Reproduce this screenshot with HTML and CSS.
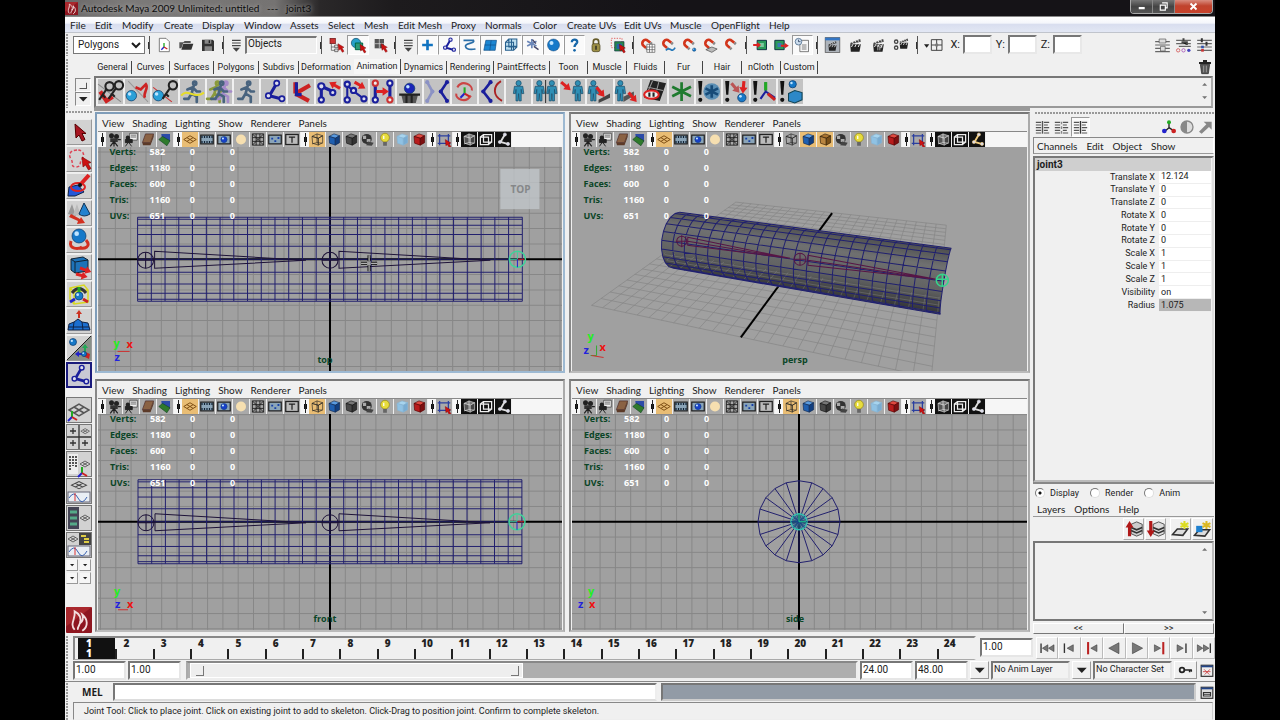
FILE: index.html
```html
<!DOCTYPE html>
<html lang="en">
<head>
<meta charset="utf-8">
<title>Autodesk Maya 2009 Unlimited: untitled --- joint3</title>
<link rel="stylesheet" href="styles.css">
</head>
<body>
<div class="app">
  <header class="titlebar">
    <span class="logo" data-icon="maya"></span>
    <h1>Autodesk Maya 2009 Unlimited: untitled&nbsp;&nbsp; ---&nbsp;&nbsp; joint3</h1>
    <div class="winbtns"><button aria-label="Minimize" data-icon="wmin"></button><button aria-label="Restore" data-icon="wmax"></button><button class="close" aria-label="Close" data-icon="wclose"></button></div>
  </header>
  <nav class="menubar">
    <button>File</button><button>Edit</button><button>Modify</button><button>Create</button><button>Display</button><button>Window</button><button>Assets</button><button>Select</button><button>Mesh</button><button>Edit Mesh</button><button>Proxy</button><button>Normals</button><button>Color</button><button>Create UVs</button><button>Edit UVs</button><button>Muscle</button><button>OpenFlight</button><button>Help</button>
  </nav>
  <div class="status row">
    <span class="grip"></span>
    <select class="modes" aria-label="Menu set"><option>Polygons</option></select>
    <i class="sep"></i>
    <div class="icons w22" data-icons="new open save"></div>
    <i class="sep"></i>
    <div class="icons w18" data-icons="pull"></div>
    <input class="mask" aria-label="Selection mask" value="Objects">
    <i class="sep"></i>
    <div class="icons w22" data-icons="hier object* component"></div>
    <i class="sep"></i>
    <div class="icons w18" data-icons="pull"></div>
    <div class="icons w21" data-icons="plus* joint* curve* surface* lattice* particle* sphere* question*"></div>
    <div class="icons w22" data-icons="lock highlight"></div>
    <i class="sep"></i>
    <div class="icons w21" data-icons="snapgrid snapcurve snappoint snapplane magnet"></div>
    <i class="sep"></i>
    <div class="icons w21" data-icons="input output history*"></div>
    <i class="sep"></i>
    <div class="icons w23" data-icons="renderview clap ipr rendersettings"></div>
    <i class="sep"></i>
    <div class="icons w26" data-icons="coord"></div>
    <label class="axis">X:<input></label>
    <label class="axis">Y:<input></label>
    <label class="axis">Z:<input></label>
    <div class="icons w21 push" data-icons="attr toolset chbox"></div>
  </div>
  <div class="tabs row">
    <span class="grip"></span>
    <div class="tablist">
      <button>General</button><button>Curves</button><button>Surfaces</button><button>Polygons</button><button>Subdivs</button><button>Deformation</button><button class="on">Animation</button><button>Dynamics</button><button>Rendering</button><button>PaintEffects</button><button>Toon</button><button>Muscle</button><button>Fluids</button><button>Fur</button><button>Hair</button><button>nCloth</button><button>Custom</button>
    </div>
    <div class="icons w18 push" data-icons="trash"></div>
  </div>
  <div class="shelf row">
    <span class="grip"></span>
    <div class="shelfside"><button aria-label="Shelf tab" data-icon="shelftab"></button><button aria-label="Shelf menu" data-icon="down"></button></div>
    <div class="shelfbox">
      <div class="shelficons" data-icons="setkey sphkey spherekey runY runG run joint iktool ikred1 ikred2 ikh basket mirror rotjoint ikspline body bodies bodyR footR footR2 clapred star exstar exred exaxes excubes"></div>
      <div class="spin"><span data-icon="up"></span><span data-icon="down"></span></div>
    </div>
  </div>
  <main class="main">
    <aside class="toolbox">
      <span class="hgrip"></span>
      <div class="tools" data-icons="arrow lasso paint move rotate scale universal soft manip joint*"></div>
      <div class="layouts" data-icons="lay1 lay2 lay3 lay4 lay5 lay6"></div>
      <div class="arrows" data-icons="down down down down"></div>
      <div class="brand" data-icon="maya"></div>
    </aside>
    <section class="panels">
      <article class="panel active" data-view="top"></article>
      <article class="panel" data-view="persp"></article>
      <article class="panel" data-view="front"></article>
      <article class="panel" data-view="side"></article>
    </section>
    <aside class="side">
      <span class="hgrip"></span>
      <div class="sidebar-icons"><div class="icons w19" data-icons="list1 list2 list3*"></div><div class="icons w18 push" data-icons="tri half ne"></div></div>
      <nav class="submenu box"><button>Channels</button><button>Edit</button><button>Object</button><button>Show</button></nav>
      <div class="channels">
        <h2>joint3</h2>
        <table>
          <tr><th>Translate X</th><td>12.124</td></tr>
          <tr><th>Translate Y</th><td>0</td></tr>
          <tr><th>Translate Z</th><td>0</td></tr>
          <tr><th>Rotate X</th><td>0</td></tr>
          <tr><th>Rotate Y</th><td>0</td></tr>
          <tr><th>Rotate Z</th><td>0</td></tr>
          <tr><th>Scale X</th><td>1</td></tr>
          <tr><th>Scale Y</th><td>1</td></tr>
          <tr><th>Scale Z</th><td>1</td></tr>
          <tr><th>Visibility</th><td>on</td></tr>
          <tr><th>Radius</th><td class="sel">1.075</td></tr>
        </table>
      </div>
      <div class="layers">
        <div class="radios"><label><input type="radio" name="l" checked>Display</label><label><input type="radio" name="l">Render</label><label><input type="radio" name="l">Anim</label></div>
        <nav class="submenu"><button>Layers</button><button>Options</button><button>Help</button></nav>
        <div class="layerbtns" data-icons="layup laydown laynew layadd"></div>
        <div class="layerlist"><div class="spin"><span data-icon="up"></span><span data-icon="down"></span></div></div>
        <div class="pager"><button>&lt;&lt;</button><button>&gt;&gt;</button></div>
      </div>
    </aside>
  </main>
  <div class="time row">
    <span class="grip"></span>
    <ol class="frames"></ol>
    <input class="num" aria-label="Current time" value="1.00">
    <div class="play" data-icons="first prevf prevk back playf nextk nextf last"></div>
  </div>
  <div class="range row">
    <span class="grip"></span>
    <input class="num" aria-label="Start" value="1.00">
    <input class="num" aria-label="Range start" value="1.00">
    <div class="track"><div class="thumb"><b></b><b></b></div></div>
    <input class="num" aria-label="Range end" value="24.00">
    <input class="num" aria-label="End" value="48.00">
    <button class="btn" aria-label="Anim layer" data-icon="down"></button>
    <input class="set" aria-label="Anim layer name" value="No Anim Layer">
    <button class="btn" aria-label="Character set" data-icon="down"></button>
    <input class="set" aria-label="Character set name" value="No Character Set">
    <button class="btn key" aria-label="Auto key" data-icon="key"></button>
    <button class="end" aria-label="Preferences" data-icon="prefs"></button>
  </div>
  <div class="cmd row">
    <span class="grip"></span>
    <label for="mel">MEL</label>
    <input id="mel">
    <output class="result"></output>
    <button class="end" aria-label="Script editor" data-icon="script"></button>
  </div>
  <div class="help row">
    <span class="grip"></span>
    <p>Joint Tool: Click to place joint. Click on existing joint to add to skeleton. Click-Drag to position joint. Confirm to complete skeleton.</p>
  </div>
</div>
<script src="app.js"></script>
</body>
</html>
```
FILE: styles.css
```css
* { box-sizing: border-box; }
:root { --ui: Roboto, "Liberation Sans", sans-serif; --menu: Lato, "Open Sans", sans-serif; --bold: "Open Sans", "Noto Sans", sans-serif; }
body { margin: 0; background: #000; font: 9px var(--ui); color: #1c1c1c; overflow: hidden; }
button { font: inherit; color: inherit; background: none; border: 0; padding: 0; margin: 0; display: block; }
input, select { font: inherit; color: inherit; border-radius: 0; margin: 0; min-width: 0; }
svg { display: block; width: 100%; height: 100%; }
.app { height: 100vh; margin: 0 65px; background: #f0f0f0; display: flex; flex-direction: column; }
.row { display: flex; align-items: center; flex: none; }
.push { margin-left: auto; }

.titlebar { height: 16px; flex: none; display: flex; align-items: center; background: linear-gradient(90deg, #6a6868 0, #7c7a79 60px, #757372 210px, #2a2829 255px, #1d1b1d 330px, #151317 600px); }
.titlebar h1 { font: 10px var(--menu); margin: 0; flex: 1; color: #0c0c0c; text-shadow: 0 0 4px #bbb; }
.logo { width: 13px; height: 13px; margin: 0 3px 0 0; }
.winbtns { display: flex; height: 14px; align-self: flex-start; margin-right: 2px; border: 1px solid #aaa; border-top: 0; border-radius: 0 0 4px 4px; overflow: hidden; }
.winbtns button { width: 22px; height: 13px; padding: 1px; background: linear-gradient(#777, #444 50%, #555); border-right: 1px solid #888; }
.winbtns .close { width: 37px; padding: 2px; background: linear-gradient(#d98d80, #c0432e 45%, #c8422a); border: 0; }

.menubar { height: 17px; flex: none; padding-left: 5px; display: grid; align-items: center; grid-template-columns: 25px 27px 42px 38px 42px 46px 38px 36px 34px 53px 34px 48px 34px 57px 46px 41px 58px 30px; font: 10px var(--menu); background: linear-gradient(#fff 0, #f4f6fb 40%, #d9deef 50%, #e2e7f4); border-top: 1px solid #888; border-bottom: 1px solid #c0c4cc; }
.menubar button { text-align: left; white-space: nowrap; }

.grip { width: 8px; align-self: stretch; flex: none; background: radial-gradient(circle at 1px 1px, #999 1px, transparent 1px) 1px 4px / 3px 3px repeat-y; }
.hgrip { height: 5px; flex: none; background: radial-gradient(circle at 1px 1px, #999 1px, transparent 1px) 3px 1px / 3px 3px repeat-x; }
.sep { width: 8px; height: 18px; flex: none; background: linear-gradient(#555, #555) 4px 0 / 1px 18px no-repeat, linear-gradient(#333, #333) 3px 6px / 2px 7px no-repeat; }
.icons { display: flex; align-items: center; flex: none; }
.icons button { padding: 2px 1px; height: 20px; }
.w18 button { width: 18px; } .w19 button { width: 19px; } .w21 button { width: 21px; } .w22 button { width: 22px; } .w23 button { width: 23px; } .w26 button { width: 26px; }
.icons .on { background: #fafafa; border: 1px solid; border-color: #999 #fff #fff #999; padding: 1px 0; }

.status { height: 23px; margin-bottom: 2px; }
.modes { width: 72px; height: 18px; border: 1px solid #777; background: #fff; font-size: 10px; padding: 0; }
.mask { width: 72px; height: 18px; background: #eee; border: 1px solid; border-color: #777 #fff #fff #777; border-width: 2px 1px 1px 2px; padding: 0 1px 3px; font-size: 10px; }
.axis { display: flex; align-items: center; gap: 3px; font-size: 11px; width: 45px; justify-content: flex-end; }
.axis input { width: 29px; height: 19px; border: 2px solid; border-color: #777 #e8e8e8 #e8e8e8 #777; background: #fff; }

.tabs { height: 18px; padding-right: 1px; }
.tablist { margin-left: 21px; display: grid; height: 13px; grid-template-columns: 38px 38px 44px 45px 40px 55px 47px 46px 47px 56px 38px 39px 38px 38px 39px 39px 37px; }
.tablist button { border-right: 1px solid #444; line-height: 12px; }
.tablist button:nth-child(6) { border-color: transparent; }
.tablist .on { margin-top: -2px; background: #f6f6f6; }

.shelf { height: 32px; }
.shelfside { width: 21px; padding: 2px 2px 0 2px; align-self: stretch; }
.shelfside button { width: 16px; height: 14px; border: 1px solid; border-color: #888 #fff #fff #888; }
.shelfbox { flex: 1; margin-right: 2px; height: 32px; border: 2px solid; border-color: #777 #aaa #999 #777; padding: 0 2px 2px; display: flex; justify-content: space-between; align-items: center; }
.shelficons { display: grid; grid-template-columns: repeat(26, 1fr); width: 707px; }
.shelficons button { height: 25px; margin-right: 2px; background: #c3c3c3; }
.spin { width: 9px; display: flex; flex-direction: column; justify-content: space-between; height: 20px; opacity: .6; }
.spin span { height: 7px; }

.main { flex: 1; min-height: 0; display: flex; }
.toolbox { width: 29px; flex: none; display: flex; flex-direction: column; padding: 2px 2px 1px 1px; }
.toolbox button { width: 26px; height: 26px; margin-bottom: 1px; background: #d2d2d2; border: 1px solid; border-color: #eee #999 #999 #eee; }
.tools { margin-top: 4px; }
.tools .on { border: 2px solid #1a1a7c; background: #c9c9d4; }
.layouts { margin-top: 8px; }
.layouts button { border-color: #777; }
.toolbox .arrows { display: grid; grid-template-columns: 13px 13px; }
.toolbox .arrows button { width: 12px; height: 12px; padding: 2px; background: #f6f6f6; }
.brand { margin-top: auto; height: 26px; width: 26px; }

.panels { flex: 1; min-width: 0; display: grid; grid-template-columns: 470fr 461fr; grid-template-rows: 262fr 253fr; gap: 6px 4px; border-top: 3px solid #999; padding: 1px 0 2px 1px; }
.panel { min-width: 0; min-height: 0; display: flex; flex-direction: column; border: 2px solid; border-color: #777 #aaa #bbb #888; padding: 0 1px; }
.panel.active { border-color: #7f9db9 #9db9d2 #9db9d2 #7f9db9; }
.submenu { display: flex; align-items: center; font: 10px var(--menu); gap: 9px; }
.panel .submenu { height: 17px; flex: none; padding-left: 4px; gap: 8px; }
.pbar { display: flex; height: 16px; flex: none; border-top: 1px solid #888; background: #f6f6f6; }
.pbar i { width: 8px; background: linear-gradient(#222, #222) 4px 1px / 1px 13px no-repeat, linear-gradient(#111, #111) 3px 5px / 3px 5px no-repeat; }
.pbar button { width: 17px; height: 15px; background: #a9a9a9; border-right: 1px solid #eee; }
.pbar .on { background: #e9bd74; }
.pbar .black { background: #111; }
.view { flex: 1; min-height: 0; background: #a0a0a0; overflow: hidden; }
.view text { font: bold 9px var(--bold); }
.lab { fill: #0a4526; } .val { fill: #fff; }
.view .cube { fill: #858789; font-size: 10px; }
.view .giz { font-size: 11px; }

.side { width: 185px; flex: none; padding: 3px 1px 0 3px; display: flex; flex-direction: column; }
.side > .hgrip { margin-left: 2px; }
.sidebar-icons { display: flex; height: 21px; align-items: center; }
.side .box { height: 17px; margin-bottom: 2px; border: 1px solid; border-color: #888 #fff #999 #888; padding-left: 3px; }
.channels { flex: 1; border: 2px solid; border-color: #777 #ddd #bbb #777; padding: 0 1px 0 0; }
.channels h2 { font: bold 10px/13px var(--ui); margin: 0; padding-left: 2px; height: 13px; background: #cfcfcf; }
.channels table { border-collapse: collapse; width: 100%; height: 141px; }
.channels th { font-weight: 400; text-align: right; padding: 0 4px 0 0; line-height: 11px; }
.channels td { width: 52px; background: #fff; padding: 0 0 0 2px; line-height: 11px; border-bottom: 1px solid #eee; }
.channels .sel { background: #b7b7b7; }
.layers { border-top: 2px solid #888; }
.radios { display: flex; height: 18px; align-items: center; padding-left: 2px; gap: 11px; }
.radios label { display: flex; align-items: center; gap: 5px; }
.radios input { appearance: none; width: 10px; height: 10px; border-radius: 50%; border: 1px solid; border-color: #777 #ddd #ddd #777; background: #fff; }
.radios input:checked { background: radial-gradient(circle, #111 0 1px, #fff 2px); }
.layers .submenu { height: 15px; padding-left: 4px; border-bottom: 1px solid #999; }
.layerbtns { display: flex; justify-content: flex-end; height: 24px; padding: 1px 1px 1px 0; gap: 1px; }
.layerbtns button { width: 21px; border: 1px solid; border-color: #fff #aaa #aaa #fff; }
.layerbtns button:nth-child(3) { margin-left: 3px; }
.layerlist { height: 80px; border: 2px solid; border-color: #777 #bbb #777 #777; display: flex; justify-content: flex-end; padding: 3px; }
.layerlist .spin { height: 70px; }
.pager { display: grid; grid-template-columns: 1fr 1fr; height: 11px; margin: 2px 0 0; }
.pager button { border: 1px solid; border-color: #fff #777 #777 #fff; line-height: 9px; }

.num, .set { height: 19px; border: 2px solid; border-color: #777 #e6e6e6 #e6e6e6 #777; background: #fff; padding: 0 1px 2px; }
.num { width: 53px; flex: none; font-size: 10px; }
.set { width: 79px; background: #f2f2f2; flex: none; }
.time { height: 26px; padding-top: 1px; }
.frames { list-style: none; margin: 0 4px 0 0; padding: 0 0 0 3px; flex: 1; height: 24px; display: grid; grid-template-columns: repeat(24, 1fr); border: 2px solid; border-color: #888 transparent #aaa #888; border-bottom-width: 1px; }
.frames li { font: bold 10px/10px var(--bold); color: #222; background: linear-gradient(#222, #222) 0 100% / 2px 10px no-repeat; padding-left: 6px; }
.frames li b { display: block; width: 10px; text-align: center; white-space: nowrap; }
.frames li:nth-child(n+10) b { width: 14px; }
.frames li:first-child { background: #111; color: #fff; }
.play { display: grid; grid-template-columns: repeat(8, 1fr); width: 179px; margin-left: 3px; height: 21px; }
.play button { border: 1px solid; border-color: #fff #bbb #bbb #fff; padding: 2px; }
.range { height: 21px; padding-bottom: 1px; gap: 2px; }
.range .grip { margin-right: -2px; }
.track { flex: 1; height: 19px; margin-left: 3px; background: #aeaeae; border: 2px solid; border-color: #888 #eee #eee #aaa; padding-left: 2px; }
.thumb { width: 50%; height: 15px; background: #eee; border: 1px solid #fff; display: flex; justify-content: space-between; padding: 2px 3px 1px 5px; }
.thumb b { width: 8px; border-right: 1px solid #777; border-bottom: 1px solid #777; }
.btn { width: 19px; height: 18px; border: 1px solid; border-color: #fff #999 #999 #fff; padding: 1px; flex: none; }
.btn.key { width: 23px; }
.end { width: 16px; height: 17px; padding: 1px; flex: none; }
.cmd { height: 21px; border-top: 1px solid #888; }
.cmd label { width: 40px; padding-left: 9px; font: bold 10px var(--bold); }
.cmd input { flex: 543; height: 18px; border: 2px solid; border-color: #777 #eee #ddd #777; background: #fff; }
.result { flex: 538; margin: 0 3px 0 4px; height: 18px; background: #929ba6; border: 2px solid; border-color: #777 #ccc #ccc #777; }
.help { height: 18px; padding-right: 2px; align-items: stretch; }
.help p { margin: 0; flex: 1; border: 1px solid; border-color: #888 #ccc #eee #888; padding-left: 10px; line-height: 17px; }
```
FILE: app.js
```js
const bone = (c, s = 1.6) => `<g stroke="${c}" fill="none"><path d="M15 4 8 16 19 19" stroke-width="3"/><g fill="#dde" stroke-width="${s}"><circle cx="15" cy="4" r="2.5"/><circle cx="7" cy="16" r="2.5"/><circle cx="20" cy="19" r="2.5"/></g></g>`;
const cube = (a, b, c, s = '#222') => `<g stroke="${s}" stroke-linejoin="round"><path fill="${a}" d="M4 7 12 3l9 3-7 4z"/><path fill="${b}" d="M4 7l10 3v11L5 18z"/><path fill="${c}" d="M14 10l7-4v11l-7 4z"/></g>`;
const cursor = (x = 12, y = 10) => `<path transform="translate(${x} ${y})" d="M0 0l1 10 2.500-2 3 5 2.500-1.500-3-5 3-1z" fill="#c11" stroke="#700" stroke-width=".6"/>`;
const clap = '<g><path d="M4 11h16l-2 11H5z" fill="#222"/><path d="M4 9 19 3l1 4L5 11z" fill="#444"/><path d="M7 7l2 3M11 5.500l2 3M15 4l2 3M8 11l-2 4M13 11l-2 4M18 11l-2 4" stroke="#eee" stroke-width="1.500"/></g>';
const mag = '<g transform="translate(-1 -1) rotate(-50 11 11)" fill="none" stroke-width="4"><path d="M6 15v-5a5 5 0 0 1 10 0v5" stroke="#d2361c"/><path d="M6 15v3M16 15v3" stroke="#888"/></g>';
const grid = (c = '#444') => `<path d="M2 12 12 6l10 6-10 6zM7 9l10 6M17 9 7 15" fill="none" stroke="${c}" stroke-width="1.500"/>`;
const runner = c => `<g stroke="${c}" fill="none" stroke-width="2.600" stroke-linecap="round"><circle cx="14" cy="4" r="1.500"/><path d="M13 7l-2 7 5 3v5M11 14l-3 5H4M7 10l5-2 4 4h3"/></g>`;
const man = (x, c = '#2f8fb5') => `<g transform="translate(${x} 0)" fill="${c}" stroke="#1b4f6b" stroke-width=".7"><circle cx="0" cy="4" r="2.500"/><path d="M-4 7h8l1 7h-2l-.5-4v11h-2L0 14l-.5 7h-2V10L-3 14h-2z"/></g>`;
const ball = (x, y, r, c = '#1679c9') => `<circle cx="${x}" cy="${y}" r="${r}" fill="${c}" stroke="#0b3a6b" stroke-width=".7"/><circle cx="${x - r / 3}" cy="${y - r / 3}" r="${r / 3}" fill="#bfe4ff"/>`;
const bang = '<path d="M2 2h4L5 15H3z" fill="#111"/><circle cx="4" cy="20" r="2" fill="#111"/>';
const lines = (a) => `<path d="M2 5h8M2 9h8M2 13h8M2 17h8M2 21h8M14 5h8M14 9h6M14 13h8M14 17h6M14 21h8" stroke="#555" stroke-width="1.800"/><path d="M12 3v19" stroke="${a}" stroke-width="2"/>`;
const arrowL = (x, y, a, c = '#d22') => `<g transform="translate(${x} ${y}) rotate(${a})"><path d="M0-1.500h6V-4l6 4-6 4V1.500H0z" fill="${c}"/></g>`;
const star5 = (x, y, c, r = 8) => `<path transform="translate(${x} ${y})" d="M0-${r}V${r}M-${r} -${r / 2}L${r} ${r / 2}M-${r} ${r / 2}L${r} -${r / 2}" stroke="${c}" stroke-width="2.600"/>`;
const tl = x => `<path d="${x}" fill="#777" stroke="#333" stroke-width=".8"/>`;
const axes = (x, y) => `<g stroke-width="2"><path d="M${x} ${y}v-6" stroke="#2a2"/><path d="M${x} ${y}l-4 4" stroke="#22c"/><path d="M${x} ${y}l5 3" stroke="#c22"/></g>`;
const keyI = (x, y) => `<g stroke="#222" fill="none" stroke-width="2"><circle cx="${x + 4}" cy="${y}" r="4"/><path d="M${x + 1} ${y + 3}l-7 10M${x - 3} ${y + 8}l3 3"/></g>`;
const frame = '<rect x="2" y="5" width="20" height="14" fill="#8aa4b8" stroke="#222" stroke-width="2"/>';
const wave = '<rect x="1" y="13" width="22" height="10" fill="#e9eef4" stroke="#667"/><path d="M2 19q5-8 9 0t9-1" stroke="#3a62b0" fill="none"/><path d="M8 14v8" stroke="#d33"/>';

const I = {
  maya: '<rect width="24" height="24" rx="1" fill="#8e1620"/><path d="M0 0h24L0 18z" fill="#c43a3a" opacity=".5"/><path d="M8 21C3 15 9 12 8 4c6 3 6 7 5 11 3-2 3-5 2-8 5 4 6 11 0 15M11 21c-1-3 3-5 2-8" fill="none" stroke="#f3dede" stroke-width="1.700"/>',
  wmin: '<rect x="6" y="13" width="13" height="5" fill="#fff"/>', wmax: '<path d="M9 4h11v11h-4M5 9h11v11H5z" fill="none" stroke="#fff" stroke-width="2.500"/>', wclose: '<path d="M4 4l16 16M20 4 4 20" stroke="#fff" stroke-width="5"/>',
  new: '<path d="M5 2h10l5 5v15H5z" fill="#fff" stroke="#444"/>' + axes(12, 15), open: '<path d="M2 8h6l2-2h9v3H8l-3 8H2z" fill="#555"/><path d="M5 19 8 10h15l-3 9z" fill="#333"/>', save: '<path d="M3 4h16l2 2v15H3z" fill="#333"/><path d="M7 4h10v6H7zM7 14h11v7H7z" fill="#888"/><path d="M14 5v4" stroke="#222" stroke-width="2"/>',
  pull: '<path d="M6 5h13M6 9h13M6 13h13" stroke="#444" stroke-width="1.800"/><path d="M7 16h11l-5.500 6z" fill="#444"/>',
  down: '<path d="M4 8h17l-8.500 9z" fill="#222"/>', up: '<path d="M4 16h17l-8.500-9z" fill="#222"/>', shelftab: '<path d="M5 18h13V7l2 1v12H5z" fill="#555"/>',
  hier: '<rect x="3" y="2" width="8" height="8" fill="#c33" stroke="#611"/><path d="M5 10v10h6M5 15h6" stroke="#444" fill="none"/><path d="M10 12h5v4h-5zM10 18h5v4h-5z" fill="#ddd" stroke="#444"/>' + cursor(15, 10),
  object: '<circle cx="9" cy="9" r="7" fill="#28a0c8" stroke="#146"/><path d="M8 9h11v10H8z" fill="#2d9a78" stroke="#064" stroke-width="1.500"/>' + cursor(15, 11), component: '<path d="M4 3h14v14H4z" fill="#555"/><path d="M11 3v14M4 10h14" stroke="#ddd"/>' + cursor(14, 10),
  plus: '<path d="M12 4v16M4 12h16" stroke="#1173c0" stroke-width="4"/>', joint: bone('#1a1f9c'),
  curve: '<path d="M3 5h15c3 5-13 4-12 9 1 5 9 5 15 4" fill="none" stroke="#2a6ea8" stroke-width="2.500"/>', surface: '<path d="M5 5h16l-2 15H2z" fill="#1b86d2" stroke="#0c4d87"/><path d="M13 5l-2 15M3 12h17" stroke="#0c4d87"/>',
  lattice: '<path d="M3 8h12v12H3zM8 3h12v12H8zM3 8l5-5M15 20l5-5M3 14h17M12 3v17" fill="#bde" stroke="#27608e" stroke-width="1.600"/>', particle: star5(11, 10, '#6a86b8', 7) + '<path d="M14 14l7 5M12 4l5 6" stroke="#446" stroke-width="2"/>', sphere: ball(12, 12, 9), question: '<path d="M8 8c0-6 9-5 8 0-1 3-4 3-4 7" fill="none" stroke="#1666a8" stroke-width="3.500"/><circle cx="12" cy="20" r="2" fill="#1666a8"/>',
  lock: '<path d="M8 11V7c0-5 8-5 8 0v4" fill="none" stroke="#665c2b" stroke-width="2.500"/><rect x="6" y="10" width="12" height="12" rx="3" fill="#9c8f45" stroke="#443c18"/><path d="M12 13v6" stroke="#222" stroke-width="2"/>', highlight: '<rect x="2" y="2" width="16" height="14" fill="none" stroke="#d22" stroke-dasharray="2"/><path d="M7 7h14v14H7z" fill="#288848" stroke="#134"/><path d="M10 10h8v8h-8z" fill="#2463a8"/>' + cursor(14, 11),
  magnet: mag, snapgrid: mag + '<path d="M11 11h12v12H11zM15 11v12M19 11v12M11 15h12M11 19h12" fill="#fff" stroke="#555"/>', snapcurve: mag + '<path d="M8 20c7-8 8 6 14-4" fill="none" stroke="#2678b8" stroke-width="2.500"/>', snappoint: mag + ball(19, 19, 2.5), snapplane: mag + '<path d="M5 19l9-4 8 3-8 5z" fill="#bbb" stroke="#444"/>',
  input: '<path d="M7 5h14v14H7z" fill="#2b9a5b" stroke="#134" stroke-width="1.500"/><path d="M11 9h6v6h-6z" fill="#7cc9a0"/>' + arrowL(1, 12, 0), output: '<path d="M2 5h14v14H2z" fill="#2b9a5b" stroke="#134" stroke-width="1.500"/><path d="M6 9h6v6H6z" fill="#3b78b8"/>' + arrowL(11, 13, 0), history: '<path d="M8 5h13v17H8z" fill="#f6f6f6" stroke="#444"/><path d="M11 12h7M11 15h7M11 18h7" stroke="#444"/><circle cx="6" cy="7" r="5" fill="#cde" stroke="#357"/><path d="M6 4v3h3" fill="none" stroke="#124"/>',
  clap, renderview: '<rect x="1" y="1" width="22" height="22" fill="#aeb4bb" stroke="#444"/><path d="M1 1h22v4H1z" fill="#3476c4"/><g transform="translate(3 4) scale(.75)">' + clap + '</g>', ipr: clap + '<path d="M9 13h2v7M14 13v7M14 13h3v3h-3" stroke="#eee" fill="none"/>', rendersettings: '<g transform="translate(6 0) scale(.8)">' + clap + '</g><g fill="none" stroke="#444" stroke-width="2"><circle cx="4" cy="7" r="2.500"/><circle cx="4" cy="16" r="2.500"/></g>',
  coord: '<path d="M-3 11h8l-4 5z" fill="#222"/><path d="M8 4h16v16H8zM16 4v16M8 12h16" fill="none" stroke="#444" stroke-width="1.500"/><circle cx="16" cy="12" r="2.500" fill="#777"/>',
  attr: '<path d="M1 7h22M1 12h22M1 17h22M1 22h22" stroke="#666" stroke-width="1.800"/><path d="M7 3h10v6H7zM9 14h7v7H9z" fill="#ddd" stroke="#555"/>', toolset: '<path d="M1 5h22M1 10h22M5 14h18" stroke="#666" stroke-width="1.800"/><path d="M12 2v4M9 8h8v4" stroke="#444" stroke-width="3"/><circle cx="4" cy="20" r="2.500" fill="none" stroke="#c33"/><circle cx="12" cy="20" r="2.500" fill="none" stroke="#93a"/><circle cx="20" cy="20" r="2.500" fill="#44b"/>', chbox: '<path d="M1 5h22M1 10h22M1 15h22M1 20h22" stroke="#666" stroke-width="1.800"/><path d="M8 2v6M15 7v6" stroke="#333" stroke-width="3"/><path d="M7 13h4v4H7z" fill="#35a"/><path d="M7 18h4v4H7z" fill="#c33"/>',
  trash: '<path d="M5 8h14l-2 14H7z" fill="#555" stroke="#222"/><path d="M3 6h18M9 3h6" stroke="#222" stroke-width="3"/><path d="M10 10v10M14 10v10" stroke="#bbb"/>',
  setkey: '<path d="M0 5 22 22" stroke="#888"/><path d="M2 12l6 9 6-4" fill="none" stroke="#c22" stroke-width="4"/>' + keyI(7, 7) + keyI(16, 6), sphkey: '<path d="M3 2 22 22" stroke="#999"/>' + ball(6, 16, 5, '#2aa0d8') + '<path d="M10 8l5 2 5-5c3 4-3 8-1 13" stroke="#c22" stroke-width="2.500" fill="none"/>', spherekey: '<path d="M1 8l18 14" stroke="#c33"/>' + ball(6, 16, 5, '#2aa0d8') + keyI(16, 6),
  runY: runner('#48637e') + '<path d="M1 16c6-8 12 4 22-3" fill="none" stroke="#e6dc2a" stroke-width="2"/>', runG: '<g transform="translate(-4 0)">' + runner('#8a9a3c') + '</g><g transform="translate(4 0)">' + runner('#a58bc9') + '</g>' + runner('#48637e'), run: runner('#48637e'),
  iktool: '<path d="M7 3v11M7 14 21 6M7 14l13 7" stroke="#c22" stroke-width="4"/><path d="M8 3v12h5" fill="none" stroke="#1a1f9c" stroke-width="3"/>', ikred1: '<g fill="#dde" stroke="#1a1f9c" stroke-width="2"><path d="M5 20V7l11 5" stroke-width="3" fill="none"/><circle cx="5" cy="7" r="3"/><circle cx="5" cy="20" r="2.500"/><circle cx="16" cy="13" r="2.500"/></g>' + arrowL(23, 9, 210), ikred2: '<g fill="#dde" stroke="#1a1f9c" stroke-width="2"><path d="M4 20V6l5 5 11 8" fill="none"/><circle cx="4" cy="5" r="2.500"/><circle cx="4" cy="20" r="2.500"/><circle cx="10" cy="11" r="2.500"/><circle cx="20" cy="19" r="2.500"/></g>' + arrowL(11, 3, 30),
  ikh: '<g fill="#eee" stroke="#1a1f9c" stroke-width="3"><path d="M5 5v15M19 5v15"/><g stroke-width="2"><circle cx="5" cy="4" r="2.500" stroke="#c33"/><circle cx="5" cy="20" r="2.500"/><circle cx="19" cy="4" r="2.500"/><circle cx="19" cy="20" r="2.500" stroke="#c33"/></g></g>' + arrowL(6, 12, 0), basket: ball(12, 9, 5, '#1a25b8') + '<path d="M4 15h16l-2 8H6z" fill="#555"/><path d="M2 15h20M9 16v7M14 16v7" stroke="#222" stroke-width="2"/>',
  mirror: '<g fill="none" stroke-width="2.500"><path d="M3 3l5 9-5 9" stroke="#8b92c4"/><path d="M22 3l-6 9 6 9" stroke="#1a1f9c"/></g><g fill="#8b92c4"><circle cx="3" cy="3" r="2"/><circle cx="8" cy="12" r="2"/><circle cx="3" cy="21" r="2"/></g><g fill="#1a1f9c"><circle cx="22" cy="3" r="2"/><circle cx="16" cy="12" r="2"/><circle cx="22" cy="21" r="2"/></g>',
  rotjoint: '<path d="M5 8c5-8 15-2 14 3M18 16c-5 8-15 3-14-2" fill="none" stroke="#c44" stroke-width="2"/>' + axes(12, 14), ikspline: '<path d="M11 3 4 12l7 9" fill="none" stroke="#1a1f9c" stroke-width="2.500"/><path d="M21 2c-8 5-8 14 1 19" fill="none" stroke="#a22" stroke-width="1.800"/><g fill="#1a1f9c"><circle cx="11" cy="3" r="2"/><circle cx="4" cy="12" r="2"/><circle cx="11" cy="21" r="2"/></g>',
  body: man(12), bodies: man(6) + man(18) + '<path d="M12 1v22" stroke="#333"/>', bodyR: man(17) + arrowL(1, 3, 40), footR: man(6) + '<path d="M11 20l11-6v4l-11 5z" fill="#444"/>' + arrowL(9, 8, 50), footR2: man(5) + '<path d="M8 17l10-5v4L8 22z" fill="#555"/>' + arrowL(13, 13, 50), clapred: '<path d="M8 1 23 4 17 21 2 18z" fill="#222"/><path d="M6 8l14 3M10 2 6 11M16 3l-2 8" stroke="#999"/><ellipse cx="9" cy="15" rx="7" ry="4" fill="#eee" stroke="#d22" stroke-width="2"/><path d="M7 13v4M11 13v4" stroke="#222" stroke-width="2"/>', star: star5(12, 12, '#1e7a2e', 9), exstar: bang + '<circle cx="15" cy="12" r="8" fill="#5b8fb5"/>' + star5(15, 12, '#174b78', 6), exred: bang + arrowL(8, 4, 50, '#b55') + arrowL(20, 2, 95) + ball(18, 18, 4), exaxes: bang + '<path d="M14 3v9l-5 7M14 12l9 6" stroke="#1a1f9c" stroke-width="2" fill="none"/><path d="M14 3v8" stroke="#2a2" stroke-width="3"/><path d="M16 14l7 6" stroke="#c22" stroke-width="3"/>', excubes: bang + ball(14, 5, 3.5) + '<path d="M10 14l6-3 7 2v7l-7 3-6-2z" fill="#2d88c8" stroke="#145"/>',
  arrow: '<path d="M8 4l1 14 3-3 3 6 3-1.500-3-6h4z" fill="#a81420" stroke="#500"/>', lasso: '<path d="M10 3C3 3 1 8 4 12s-1 8 5 8 3-5 6-8 2-9-5-9z" fill="none" stroke="#d45" stroke-width="1.500" stroke-dasharray="3 2"/>' + cursor(15, 10), paint: '<path d="M2 13l9-2 6 7-9 4H1z" fill="#2458d8" stroke="#124"/><ellipse cx="11" cy="13" rx="7" ry="4" fill="none" stroke="#d22" stroke-width="2"/><path d="M22 1 13 11" stroke="#d22" stroke-width="4"/><circle cx="13" cy="11" r="2" fill="#111"/>', move: '<path d="M1 13 5 3l4 12z" fill="#999"/><path d="M6 14 10 3l4 12z" fill="#bbb"/><path d="M12 13 17 2l6 11q-6 4-11 0z" fill="#2282cf" stroke="#135"/><path d="M4 13l9 5 1-2 4 6-8 1 1-3-9-4z" fill="#d33020"/>', rotate: ball(12, 8, 7) + '<path d="M4 13c-3 9 8 8 11 6M19 12c6 7-2 9-6 8" fill="none" stroke="#d33020" stroke-width="3"/>', scale: '<path d="M4 4l12-2 5 3v11L8 18l-4-3z" fill="#1d72b8" stroke="#123"/><path d="M4 4l4 3 13-2M8 7v11" stroke="#123" fill="none"/>' + arrowL(9, 19, 15) + arrowL(13, 13, 20), universal: '<path d="M3 6l14-3 4 5v12L7 22l-4-5zM3 6l4 4 14-2M7 10v12" fill="none" stroke="#d8d822" stroke-width="1.500"/><path d="M5 11q7-9 14 0" fill="none" stroke="#333" stroke-width="3"/>' + ball(12, 14, 4) + '<path d="M12 10V5" stroke="#2a2" stroke-width="3"/><path d="M8 17l-5 3" stroke="#22c" stroke-width="3"/><path d="M16 17l5 3" stroke="#c22" stroke-width="3"/>', soft: '<path d="M2 15l5-2 4-3 4 3 6 1 2 7H1z" fill="#1c6fd0" stroke="#124"/><path d="M7 13l-1 8M15 13l1 8M2 18h20" stroke="#124"/><path d="M11 9V5H9l3-4 3 4h-2v4z" fill="#c32"/>', manip: '<path d="M0 24 24 0v24z" fill="#889088"/><path d="M0 24 24 0" stroke="#222"/>' + ball(6, 6, 3.5) + '<path d="M17 17v-5h-2l3-4 3 4h-2v5z" fill="#2a5"/><path d="M18 16l5 2-1 5-6-3z" fill="#c22"/><path d="M16 17h-4v-2l-4 3 4 3v-2h4z" fill="#22c"/>' + ball(17, 18, 2.5),
  lay1: grid('#555') + axes(5, 19), lay2: '<path d="M12 0v24M0 12h24M6 3v6M3 6h6M6 15v6M3 18h6M18 15v6M15 18h6" stroke="#333" stroke-width="1.300"/><g transform="translate(13 1) scale(.43)">' + grid() + '</g>', lay3: '<path d="M1 2h10v20H1z" fill="#eee"/><path d="M3 4v15M6 4v10M9 4v12" stroke="#555" stroke-width="2" stroke-dasharray="2 1"/><g transform="translate(12 6) scale(.5)">' + grid() + '</g>' + axes(15, 21), lay4: '<g transform="translate(3 -1) scale(.75 .6)">' + grid() + '</g>' + wave, lay5: '<path d="M1 1h11v22H1z" fill="#445"/><path d="M3 6h7M3 12h7M3 18h7" stroke="#5a8" stroke-width="3"/><g transform="translate(12 6) scale(.5)">' + grid() + '</g>', lay6: '<g transform="translate(0 0) scale(.5)">' + grid() + '</g><path d="M12 0h12v12H12z" fill="#444"/><path d="M14 3h5M17 6h5M17 9h5" stroke="#dc4" stroke-width="2"/>' + wave,
  camera: '<circle cx="8" cy="6" r="4" fill="#222"/><circle cx="16" cy="7" r="4" fill="#222"/><path d="M6 10h12v6H6z" fill="#333"/><path d="M12 15l-6 8M12 15l6 8M12 15v8M18 12h5" stroke="#222" stroke-width="2"/>', camlist: '<path d="M10 2h12v11H10z" fill="#eee" stroke="#222"/><path d="M12 5h8M12 8h8" stroke="#222"/><circle cx="7" cy="9" r="3.500" fill="#222"/><path d="M3 12h11v5H3zM8 16l-5 7M8 16l5 7" fill="#222" stroke="#222" stroke-width="1.500"/>', book: '<path d="M8 3h13l-5 14H3z" fill="#8a6244" stroke="#422"/><path d="M3 17l1 4h12l5-13V3l-5 14z" fill="#5c3a28"/>', image: '<path d="M6 3h14v12H8z" fill="#2c4ba8"/><path d="M2 12l6-5 5 3 7 4-5 8z" fill="#2f7a2c" stroke="#142"/>', grid: grid('#7a4a10'), film: frame + '<path d="M3 8h18M3 16h18" stroke="#123" stroke-width="3" stroke-dasharray="2"/>', res: frame + ball(12, 12, 5, '#1740c8'), circ: '<circle cx="12" cy="12" r="8" fill="#f6dfb0"/>', hatch: '<path d="M3 3h18v18H3zM3 3l18 18M21 3 3 21M9 3v18M15 3v18M3 9h18M3 15h18" fill="none" stroke="#222" stroke-width="1.500"/>', dots: frame + '<path d="M6 9h3v3H6zM11 13h3v3h-3zM16 8h3v3h-3z" fill="#1740a8"/>', tee: '<rect x="2" y="4" width="20" height="16" fill="#bbb" stroke="#222" stroke-width="2"/><path d="M7 8h10M12 8v9" stroke="#222" stroke-width="2"/>',
  cwire: cube('none', 'none', 'none') + '<path d="M12 3v14M12 17l-8 2M12 17l9 1" stroke="#222"/>', cblue: cube('#5a9be0', '#1f5fb0', '#123f80', '#102850'), cdark: cube('#777', '#484848', '#333', '#111'), ctex: cube('#aa7430', '#b98540', '#7a5018', '#2b1a05'), checker: '<circle cx="10" cy="11" r="8" fill="#333"/><path d="M4 6h5v5H4zM10 11h6v5h-6z" fill="#aaa"/><path d="M12 15l9 2-3 5-9-1z" fill="#444"/>', bulb: '<circle cx="12" cy="9" r="7" fill="#e7dc3c" stroke="#887a10"/><path d="M9 16h6v6H9z" fill="#666"/><path d="M10 6v5" stroke="#fff" stroke-width="2"/>', clight: cube('#a7d4ee', '#8fc2e4', '#79acd2', '#86b5d6'), cred: cube('#e04a40', '#b81c1c', '#7d0f10', '#500'), iso: '<path d="M5 3v18M19 3v18M2 6h20M2 18h20" stroke="#2b3fa0" stroke-width="2"/>' + cursor(14, 12),
  bwire: cube('#777', '#555', '#444', '#ddd') + '<path d="M12 3v14M12 17l-8 2M12 17l9 1" stroke="#eee"/>', bbox: '<path d="M3 8h13v12H3zM8 4h13v12H8zM3 8l5-4M16 20l5-4" fill="none" stroke="#eee" stroke-width="2"/>', bjoint: bone('#ddd', 1), bjointy: bone('#f0cc80', 1),
  list1: lines('#555'), list2: lines('#888').replace('M12 3v19', 'M12 4v4M12 11v4M12 18v4'), list3: lines('#333'), tri: '<path d="M12 13V4M12 13l-8 7M12 13l9 6" stroke="#222" stroke-width="2"/><circle cx="12" cy="5" r="3" fill="#2a2"/><circle cx="5" cy="18" r="3.500" fill="#22c"/><circle cx="19" cy="18" r="3.500" fill="#c22"/>', half: '<circle cx="12" cy="12" r="9" fill="#ddd" stroke="#888" stroke-width="2"/><path d="M12 3a9 9 0 0 0 0 18z" fill="#888"/>', ne: '<path d="M3 19 14 8 10 4h12v12l-4-4L7 22z" fill="#888"/>',
  layup: '<path d="M9 6l7-3 7 3v12l-7 3-7-3z" fill="#ccc" stroke="#333"/><path d="M9 10l7 3 7-3M9 14l7 3 7-3" fill="none" stroke="#333" stroke-width="2"/><path d="M5 21V10H2l5-8 5 8H9v11z" fill="#b01818"/>', laydown: '<path d="M9 6l7-3 7 3v12l-7 3-7-3z" fill="#ddd" stroke="#333"/><path d="M9 10l7 3 7-3M9 14l7 3 7-3" fill="none" stroke="#333" stroke-width="2"/><path d="M4 2v12H1l5 8 5-8H8V2z" fill="#b01818"/>', laynew: '<path d="M2 19l6-7h13l-6 8z" fill="#ddd" stroke="#333" stroke-width="2"/>' + star5(17, 7, '#dcdc22', 5), layadd: '<path d="M2 20l6-7h13l-6 8z" fill="#ddd" stroke="#333" stroke-width="2"/><path d="M4 8h8v8H4z" fill="#1e80cf"/>' + star5(17, 7, '#dcb822', 5),
  first: '<path d="M3 5v14" stroke="#333" stroke-width="2"/>' + tl('M13 7v10L5 12zM22 7v10l-8-5z'), prevf: '<path d="M5 5v14" stroke="#333" stroke-width="2"/>' + tl('M18 7v10L9 12z'), prevk: '<path d="M6 3v18" stroke="#b22" stroke-width="3"/>' + tl('M19 7v10l-9-5z'), back: tl('M19 4v16L4 12z'), playf: tl('M5 4v16l15-8z'), nextk: '<path d="M18 3v18" stroke="#b22" stroke-width="3"/>' + tl('M5 7v10l9-5z'), nextf: '<path d="M19 5v14" stroke="#333" stroke-width="2"/>' + tl('M6 7v10l9-5z'), last: '<path d="M21 5v14" stroke="#333" stroke-width="2"/>' + tl('M2 7v10l8-5zM11 7v10l8-5z'),
  key: '<circle cx="6" cy="12" r="4" fill="none" stroke="#222" stroke-width="3"/><path d="M10 12h13M19 12v4M22 12v3" stroke="#222" stroke-width="2.500"/>', prefs: '<rect x="2" y="3" width="20" height="19" fill="#eee" stroke="#333" stroke-width="2"/><path d="M2 5h20" stroke="#248" stroke-width="3"/><path d="M7 10l9 9M17 10l-9 9M5 14h13" stroke="#c44" stroke-width="1.500"/>', script: '<rect x="2" y="3" width="20" height="19" fill="#ddd" stroke="#333" stroke-width="2"/><path d="M2 5h20" stroke="#248" stroke-width="3"/><path d="M6 12h12v6H6zM6 15h12" fill="#eee" stroke="#333" stroke-width="2"/>'
};
const svg = n => `<svg viewBox="0 0 24 24" aria-hidden="true" overflow="visible">${I[n] || ''}</svg>`;

/* Viewport drawings */
const P = 15.3;
const line = (x1, y1, x2, y2) => `M${x1.toFixed(1)} ${y1.toFixed(1)}L${x2.toFixed(1)} ${y2.toFixed(1)}`;
function flatGrid(ax, ay, w, h) {
  let d = '';
  for (let x = ax % P; x < w; x += P) d += line(x, 0, x, h);
  for (let y = ay % P; y < h; y += P) d += line(0, y, w, y);
  return `<path d="${d}" stroke="#878787"/><path d="${line(ax, 0, ax, h)}${line(0, ay, w, ay)}" stroke="#000" stroke-width="2"/>`;
}
function tube(ay) {
  let d = '';
  for (let i = 0; i <= 28; i++) d += line(40 + i * 13.71, ay - 42, 40 + i * 13.71, ay + 42);
  for (let k = 0; k <= 10; k++) { const y = ay - 42 * Math.cos(k * Math.PI / 10); d += line(40, y, 424, y); }
  const b = x => `<circle cx="${x}" cy="${ay + 1}" r="8"/><path d="M${x - 8} ${ay + 1}h16M${x} ${ay - 7}v16M${x + 9} ${ay - 8}v17L${x + 160} ${ay + 1}z"/>`;
  return `<path d="${d}" stroke="#22206e"/><g stroke="#1d1238" fill="none">${b(48)}${b(232)}</g><circle cx="419" cy="${ay}" r="8" fill="none" stroke="#3fd39a" stroke-width="1.500"/><path d="M419 ${ay}v-7M411 ${ay}h8" stroke="#3fd39a"/><path d="M419 ${ay}h7" stroke="#c22"/><path d="M419 ${ay}v8" stroke="#22c"/>`;
}
function gizmo(l) { return l.map(([t, x, y, c]) => `<text class="giz" x="${x}" y="${y}" fill="${c}">${t}</text>`).join(''); }
function hud() {
  return [['Verts:', 582], ['Edges:', 1180], ['Faces:', 600], ['Tris:', 1160], ['UVs:', 651]].map(([n, v], i) => { const y = 8 + i * 16; return `<text class="lab" x="12" y="${y}">${n}</text><text class="val" x="52" y="${y}">${v}</text><text class="val" x="92" y="${y}">0</text><text class="val" x="132" y="${y}">0</text>`; }).join('');
}
function persp() {
  /* corners of the ground plane: back-left, back-right, front-right, front-left */
  const [x0, y0, x1, y1, x2, y2, x3, y3] = [164, 55, 374, 78, 359, 230, 20, 158];
  const dx1 = x1 - x2, dx2 = x3 - x2, dx3 = x0 - x1 + x2 - x3, dy1 = y1 - y2, dy2 = y3 - y2, dy3 = y0 - y1 + y2 - y3;
  const D = dx1 * dy2 - dx2 * dy1, g = (dx3 * dy2 - dx2 * dy3) / D, h = (dx1 * dy3 - dx3 * dy1) / D;
  const pt = (u, v) => { const w = g * u + h * v + 1; return [((x1 - x0 + g * x1) * u + (x3 - x0 + h * x3) * v + x0) / w, ((y1 - y0 + g * y1) * u + (y3 - y0 + h * y3) * v + y0) / w]; };
  let gd = '';
  for (let i = 0; i <= 24; i++) gd += line(...pt(i / 24, 0), ...pt(i / 24, 1)) + line(...pt(0, i / 24), ...pt(1, i / 24));
  const q = (t, a) => {
    const T = [108 + 271 * t, 65 + 36 * t], B = [102 + 266 * t, 121 + 46 * t], r = Math.cos(a), m = Math.sin(a), bu = 15 - 13 * t;
    return [(T[0] + B[0]) / 2 + (T[0] - B[0]) / 2 * r - bu * m, (T[1] + B[1]) / 2 + (T[1] - B[1]) / 2 * r];
  };
  let cd = '', outline = '';
  for (let i = 0; i <= 22; i++) { const t = i / 22 * (.88 + .12 * i / 22); for (let k = 0; k < 10; k++) cd += line(...q(t, k * Math.PI / 10), ...q(t, (k + 1) * Math.PI / 10)); }
  for (let k = 0; k <= 10; k++) { cd += line(...q(0, k * Math.PI / 10), ...q(1, k * Math.PI / 10)); outline += (k ? 'L' : 'M') + q(0, k * Math.PI / 10).join(' '); }
  for (let k = 10; k >= 0; k--) outline += 'L' + q(1, k * Math.PI / 10).join(' ');
  return `<defs><linearGradient id="sh" gradientUnits="userSpaceOnUse" x1="240" y1="80" x2="230" y2="145"><stop offset="0" stop-color="#4c4d4d"/><stop offset=".3" stop-color="#6f7070"/><stop offset=".65" stop-color="#626363"/><stop offset="1" stop-color="#343536"/></linearGradient></defs>
  <path d="${gd}" stroke="#858585" stroke-width=".7"/><path d="M169 190 260 66" stroke="#000" stroke-width="2"/><path d="${outline}z" fill="url(#sh)"/><path d="${gd}" stroke="#aaa" stroke-width=".6" opacity=".45" clip-path="url(#low)"/><clipPath id="low"><path d="M92 105 370 150v20L98 122z"/></clipPath>
  <path d="${cd}" stroke="#20206f"/><g stroke="#571545" fill="none"><circle cx="110" cy="94" r="5"/><path d="M104 94h12M110 88v12M116 90l102 21-102-13zM236 108l128 24-128-14zM116 94l102 17M236 113l128 19"/><circle cx="228" cy="112" r="6"/><path d="M222 112h12M228 106v12"/></g><g fill="none" stroke="#35d58d" stroke-width="1.500"><circle cx="370" cy="133" r="6"/><path d="M364 132h12M370 127v12"/></g>
  <path d="M25 208h-6M25 208v-10" stroke="#3a3"/><path d="M20 208l12 2" stroke="#c33"/>` + gizmo([['y', 16, 193, '#2e2'], ['z', 12, 207, '#22d'], ['x', 28, 204, '#e11']]);
}
const views = {
  top: [464, 224, () => flatGrid(232, 112, 464, 224) + tube(112) + '<rect x="402" y="22" width="39" height="40" fill="#c3c8cc" opacity=".75"/><text class="cube" x="412" y="46">TOP</text><path d="M263 116h6M273 116h6M271 108v6M271 118v6" stroke="#000" stroke-width="3"/><path d="M263 116h6M273 116h6M271 108v6M271 118v6" stroke="#eee"/><path d="M20 204h12" stroke="#c33"/>' + gizmo([['y', 16, 200, '#2e2'], ['x', 29, 201, '#e11'], ['z', 17, 214, '#22d']])],
  persp: [455, 224, persp],
  front: [464, 216, () => flatGrid(232, 108, 464, 216) + tube(108) + '<path d="M20 196h10" stroke="#c33"/>' + gizmo([['y', 16, 181, '#2e2'], ['z', 17, 194, '#22d'], ['x', 29, 194, '#e11']])],
  side: [455, 216, () => {
    const pts = [...Array(20)].map((_, k) => [227 + 41 * Math.cos(k * Math.PI / 10), 108 + 41 * Math.sin(k * Math.PI / 10)]);
    return flatGrid(227, 108, 455, 216) + `<g stroke="#22206e" fill="none"><polygon points="${pts.join(' ')}"/><path d="${pts.map(p => line(227, 108, ...p)).join('')}"/></g><circle cx="227" cy="108" r="8" fill="#2f7f98" fill-opacity=".5" stroke="#2fc0b0" stroke-width="1.500"/><path d="M219 108h16M221 102l12 12M233 102l-12 12" stroke="#114488"/><path d="M227 108v-8M227 108h7" stroke="#1bd08a"/>` + gizmo([['y', 16, 181, '#2e2'], ['z', 6, 194, '#22d'], ['x', 17, 194, '#e11']]);
  }]
};
document.querySelectorAll('[data-view]').forEach(p => {
  const n = p.dataset.view, [w, h, draw] = views[n], k = n === 'persp';
  p.innerHTML = `<nav class="submenu">${['View', 'Shading', 'Lighting', 'Show', 'Renderer', 'Panels'].map(t => `<button>${t}</button>`).join('')}</nav>
  <div class="pbar" data-icons="| camera camlist book image | grid* film res circ hatch dots tee | cwire${k ? '' : '*'} cblue${k ? '*' : ''} ${k ? 'ctex*' : 'cdark'} checker bulb clight cred | iso | bwire bbox ${k ? 'bjointy' : 'bjoint'}"></div>
  <div class="view"><svg viewBox="0 0 ${w} ${h}" preserveAspectRatio="xMidYMid slice">${draw()}${hud()}<text class="lab" text-anchor="middle" x="${k || n === 'side' ? 223 : 227}" y="${h - 8}">${n}</text></svg></div>`;
});
document.querySelectorAll('[data-icons]').forEach(el => {
  el.innerHTML = el.dataset.icons.split(' ').map(n => {
    if (n === '|') return '<i></i>';
    const on = n.endsWith('*'); n = n.replace('*', '');
    return `<button aria-label="${n}" class="${on ? 'on' : ''}${/^b(wire|box|joint)/.test(n) ? ' black' : ''}">${svg(n)}</button>`;
  }).join('');
});
document.querySelectorAll('[data-icon]').forEach(el => { el.innerHTML = svg(el.dataset.icon); });
document.querySelector('.frames').innerHTML = [...Array(24)].map((_, i) => `<li><b>${i + 1}</b>${i ? '' : '<b>1</b>'}</li>`).join('');
```
